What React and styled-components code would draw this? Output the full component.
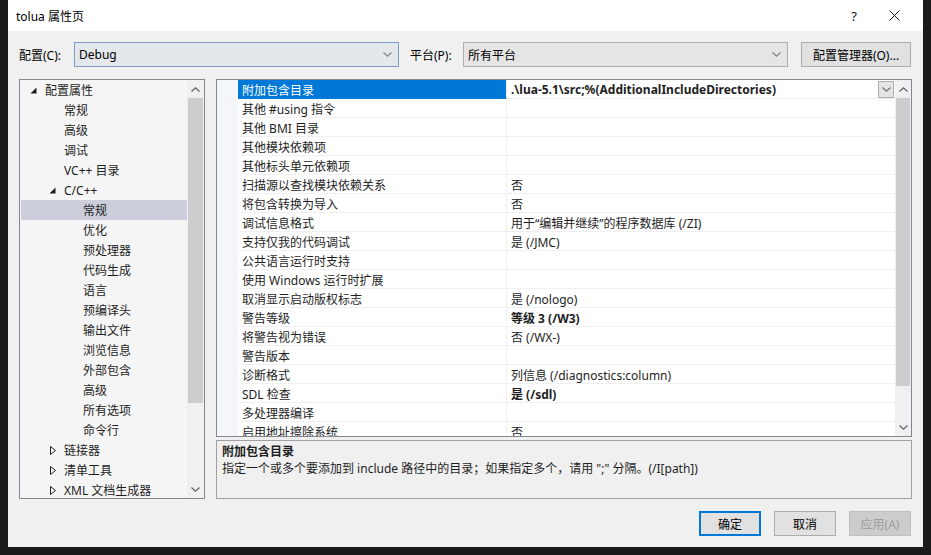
import React from 'react';
import styled, { createGlobalStyle } from 'styled-components';

const FONT = `"Noto Sans", "Noto Sans CJK SC", sans-serif`;

const GlobalStyle = createGlobalStyle`
  html, body {
    margin: 0;
    padding: 0;
    background: #1b1b1b;
  }
  body {
    font-family: ${FONT};
    font-size: 12px;
    color: #000;
  }
`;

const Dialog = styled.div`
  width: 915px;
  height: 547px;
  margin-left: 8px;
  background: #f0f0f0;
  display: flex;
  flex-direction: column;
`;

const TitleBar = styled.div`
  height: 31px;
  flex: none;
  background: #fff;
  display: flex;
  align-items: center;
  padding-left: 8px;
  padding-right: 9px;
`;

const Title = styled.div`
  flex: 1;
  font-size: 12px;
`;

const CaptionBtn = styled.div`
  width: 40px;
  height: 31px;
  display: flex;
  align-items: center;
  justify-content: center;
  font-size: 13px;
  color: #111;
`;

const Toolbar = styled.div`
  display: flex;
  align-items: center;
  height: 25px;
  padding: 11px 11px 0 11px;
  flex: none;
`;

const Label = styled.div`
  width: ${(p) => p.w}px;
  flex: none;
  white-space: nowrap;
`;

const Combo = styled.div`
  width: 325px;
  height: 25px;
  box-sizing: border-box;
  flex: none;
  display: flex;
  align-items: center;
  padding: 0 6px 0 4px;
  background: ${(p) => (p.focused ? '#e4e7eb' : '#e5e5e5')};
  border: 1px solid ${(p) => (p.focused ? '#7d9ec3' : '#adadad')};
  margin-right: ${(p) => p.mr || 0}px;
`;

const ComboText = styled.div`
  flex: 1;
`;

const Button = styled.div`
  height: 25px;
  width: ${(p) => p.w || 62}px;
  box-sizing: border-box;
  flex: none;
  display: flex;
  align-items: center;
  justify-content: center;
  background: ${(p) => (p.disabled ? '#cccccc' : '#e1e1e1')};
  color: ${(p) => (p.disabled ? '#9d9d9d' : '#000')};
  border: ${(p) =>
    p.primary ? '2px solid #0078d7' : p.disabled ? '1px solid #bfbfbf' : '1px solid #adadad'};
`;

const Main = styled.div`
  display: flex;
  gap: 11px;
  padding: 12px 11px 0 11px;
  height: 420px;
  flex: none;
`;

const TreePanel = styled.div`
  width: 186px;
  box-sizing: border-box;
  border: 1px solid #828790;
  background: #f5f5f5;
  display: flex;
  overflow: hidden;
`;

const TreeList = styled.div`
  flex: 1;
  padding-left: 1px;
  overflow: hidden;
`;

const TreeRow = styled.div`
  height: 20px;
  display: flex;
  align-items: center;
  position: relative;
  padding-left: ${(p) => 24 + p.level * 19}px;
  background: ${(p) => (p.selected ? '#cccedb' : 'transparent')};
  color: #1e1e1e;
  white-space: nowrap;
`;

const Twisty = styled.span`
  position: absolute;
  left: ${(p) => 9 + p.level * 19}px;
  top: 6px;
  width: 8px;
  height: 9px;
  display: flex;
`;

const Scrollbar = styled.div`
  width: ${(p) => p.w || 17}px;
  flex: none;
  background: #f0f0f0;
  display: flex;
  flex-direction: column;
`;

const ScrollArrow = styled.div`
  height: 18px;
  flex: none;
  display: flex;
  align-items: center;
  justify-content: center;
`;

const Track = styled.div`
  flex: 1;
  display: flex;
  flex-direction: column;
`;

const Thumb = styled.div`
  background: #cdcdcd;
  margin: 0 1px;
`;

const RightCol = styled.div`
  flex: 1;
  display: flex;
  flex-direction: column;
  gap: 3px;
`;

const Grid = styled.div`
  height: 358px;
  box-sizing: border-box;
  border: 1px solid #828790;
  background: #fff;
  display: flex;
  overflow: hidden;
`;

const Gutter = styled.div`
  width: 21px;
  flex: none;
  background: #f4f6f9;
`;

const Rows = styled.div`
  flex: 1;
  overflow: hidden;
`;

const PropRow = styled.div`
  display: flex;
  height: 19px;
`;

const NameCell = styled.div`
  width: 269px;
  flex: none;
  box-sizing: border-box;
  padding: 1px 0 0 4px;
  display: flex;
  align-items: center;
  white-space: nowrap;
  background: ${(p) => (p.selected ? '#0078d7' : '#fff')};
  color: ${(p) => (p.selected ? '#fff' : '#1e1e1e')};
  border-right: 1px solid #f0f0f0;
  border-bottom: 1px solid ${(p) => (p.selected ? '#0078d7' : '#f0f0f0')};
`;

const ValueCell = styled.div`
  flex: 1;
  box-sizing: border-box;
  padding: 1px 0 0 4px;
  display: flex;
  align-items: center;
  white-space: nowrap;
  font-weight: ${(p) => (p.bold ? 700 : 400)};
  color: #1e1e1e;
  border-bottom: 1px solid #f0f0f0;
  position: relative;
`;

const DropBtn = styled.div`
  position: absolute;
  right: 1px;
  top: 1px;
  width: 16px;
  height: 17px;
  box-sizing: border-box;
  border: 1px solid #adadad;
  background: #e5e5e5;
  display: flex;
  align-items: center;
  justify-content: center;
`;

const Desc = styled.div`
  flex: 1;
  box-sizing: border-box;
  border: 1px solid #a0a0a0;
  background: #f0f0f0;
  padding: 2px 5px;
  line-height: 17px;
  color: #1e1e1e;
`;

const DescTitle = styled.div`
  font-weight: 700;
`;

const Footer = styled.div`
  display: flex;
  justify-content: flex-end;
  gap: 13px;
  padding: 12px 12px 0 0;
`;

const Chevron = ({ up, color = '#606060', w = 9, h = 5 }) => (
  <svg width={w} height={h} viewBox="0 0 9 5">
    <polyline
      points={up ? '0.5,4.5 4.5,0.8 8.5,4.5' : '0.5,0.5 4.5,4.2 8.5,0.5'}
      fill="none"
      stroke={color}
      strokeWidth="1.2"
    />
  </svg>
);

const ScrollBar = ({ thumb, w }) => (
  <Scrollbar w={w}>
    <ScrollArrow>
      <Chevron up />
    </ScrollArrow>
    <Track>
      <Thumb style={{ height: thumb }} />
    </Track>
    <ScrollArrow>
      <Chevron />
    </ScrollArrow>
  </Scrollbar>
);

const TreeIcon = ({ open }) =>
  open ? (
    <svg width="8" height="9" viewBox="0 0 8 9">
      <polygon points="6.5,1.5 6.5,7.5 0.5,7.5" fill="#1e1e1e" />
    </svg>
  ) : (
    <svg width="8" height="9" viewBox="0 0 8 9">
      <polygon points="1.5,0.5 6.5,4.5 1.5,8.5" fill="none" stroke="#1e1e1e" strokeWidth="1" />
    </svg>
  );

const TREE = [
  { t: '配置属性', level: 0, open: true },
  { t: '常规', level: 1 },
  { t: '高级', level: 1 },
  { t: '调试', level: 1 },
  { t: 'VC++ 目录', level: 1 },
  { t: 'C/C++', level: 1, open: true },
  { t: '常规', level: 2, selected: true },
  { t: '优化', level: 2 },
  { t: '预处理器', level: 2 },
  { t: '代码生成', level: 2 },
  { t: '语言', level: 2 },
  { t: '预编译头', level: 2 },
  { t: '输出文件', level: 2 },
  { t: '浏览信息', level: 2 },
  { t: '外部包含', level: 2 },
  { t: '高级', level: 2 },
  { t: '所有选项', level: 2 },
  { t: '命令行', level: 2 },
  { t: '链接器', level: 1, open: false },
  { t: '清单工具', level: 1, open: false },
  { t: 'XML 文档生成器', level: 1, open: false },
];

const PROPS = [
  { n: '附加包含目录', v: '.\\lua-5.1\\src;%(AdditionalIncludeDirectories)', bold: true, selected: true },
  { n: '其他 #using 指令', v: '' },
  { n: '其他 BMI 目录', v: '' },
  { n: '其他模块依赖项', v: '' },
  { n: '其他标头单元依赖项', v: '' },
  { n: '扫描源以查找模块依赖关系', v: '否' },
  { n: '将包含转换为导入', v: '否' },
  { n: '调试信息格式', v: '用于“编辑并继续”的程序数据库 (/ZI)' },
  { n: '支持仅我的代码调试', v: '是 (/JMC)' },
  { n: '公共语言运行时支持', v: '' },
  { n: '使用 Windows 运行时扩展', v: '' },
  { n: '取消显示启动版权标志', v: '是 (/nologo)' },
  { n: '警告等级', v: '等级 3 (/W3)', bold: true },
  { n: '将警告视为错误', v: '否 (/WX-)' },
  { n: '警告版本', v: '' },
  { n: '诊断格式', v: '列信息 (/diagnostics:column)' },
  { n: 'SDL 检查', v: '是 (/sdl)', bold: true },
  { n: '多处理器编译', v: '' },
  { n: '启用地址擦除系统', v: '否' },
];

const App = () => {
  return (
    <>
      <GlobalStyle />
      <Dialog>
        <TitleBar>
          <Title>tolua 属性页</Title>
          <CaptionBtn>?</CaptionBtn>
          <CaptionBtn>
            <svg width="11" height="11" viewBox="0 0 11 11">
              <path d="M0.5 0.5 L10.5 10.5 M10.5 0.5 L0.5 10.5" stroke="#111" strokeWidth="1" />
            </svg>
          </CaptionBtn>
        </TitleBar>

        <Toolbar>
          <Label w={55}>配置(C):</Label>
          <Combo focused mr={11}>
            <ComboText>Debug</ComboText>
            <Chevron color="#808080" />
          </Combo>
          <Label w={53}>平台(P):</Label>
          <Combo mr={13}>
            <ComboText>所有平台</ComboText>
            <Chevron color="#808080" />
          </Combo>
          <Button w={110}>配置管理器(O)...</Button>
        </Toolbar>

        <Main>
          <TreePanel>
            <TreeList>
              {TREE.map((item, i) => (
                <TreeRow key={i} level={item.level} selected={item.selected}>
                  {item.open !== undefined && (
                    <Twisty level={item.level}>
                      <TreeIcon open={item.open} />
                    </Twisty>
                  )}
                  {item.t}
                </TreeRow>
              ))}
            </TreeList>
            <ScrollBar thumb={305} />
          </TreePanel>

          <RightCol>
            <Grid>
              <Gutter />
              <Rows>
                {PROPS.map((p, i) => (
                  <PropRow key={i}>
                    <NameCell selected={p.selected}>{p.n}</NameCell>
                    <ValueCell bold={p.bold}>
                      {p.v}
                      {p.selected && (
                        <DropBtn>
                          <Chevron color="#707070" />
                        </DropBtn>
                      )}
                    </ValueCell>
                  </PropRow>
                ))}
              </Rows>
              <ScrollBar thumb={288} w={16} />
            </Grid>
            <Desc>
              <DescTitle>附加包含目录</DescTitle>
              <div>指定一个或多个要添加到 include 路径中的目录；如果指定多个，请用 ";" 分隔。(/I[path])</div>
            </Desc>
          </RightCol>
        </Main>

        <Footer>
          <Button primary>确定</Button>
          <Button>取消</Button>
          <Button disabled>应用(A)</Button>
        </Footer>
      </Dialog>
    </>
  );
};

export default App;
